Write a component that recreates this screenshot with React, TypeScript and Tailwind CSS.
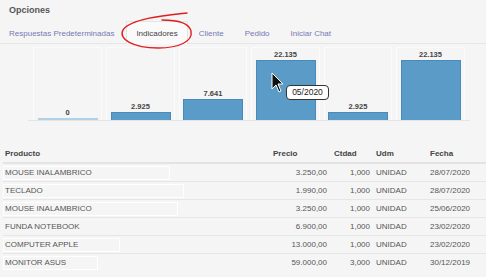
const tabs = ["Respuestas Predeterminadas", "Indicadores", "Cliente", "Pedido", "Iniciar Chat"]

const bars = [
  { label: "0", value: 0, w: 73 },
  { label: "2.925", value: 2925, w: 73 },
  { label: "7.641", value: 7641, w: 72 },
  { label: "22.135", value: 22135, w: 73 },
  { label: "2.925", value: 2925, w: 72 },
  { label: "22.135", value: 22135, w: 73 },
]

const rows = [
  { producto: "MOUSE INALAMBRICO", box: 167, precio: "3.250,00", ctdad: "1,000", udm: "UNIDAD", fecha: "28/07/2020" },
  { producto: "TECLADO", box: 181, precio: "1.990,00", ctdad: "1,000", udm: "UNIDAD", fecha: "28/07/2020" },
  { producto: "MOUSE INALAMBRICO", box: 175, precio: "3.250,00", ctdad: "1,000", udm: "UNIDAD", fecha: "25/06/2020" },
  { producto: "FUNDA NOTEBOOK", box: 0, precio: "6.900,00", ctdad: "1,000", udm: "UNIDAD", fecha: "23/02/2020" },
  { producto: "COMPUTER APPLE", box: 117, precio: "13.000,00", ctdad: "1,000", udm: "UNIDAD", fecha: "23/02/2020" },
  { producto: "MONITOR ASUS", box: 95, precio: "59.000,00", ctdad: "3,000", udm: "UNIDAD", fecha: "30/12/2019" },
]

const MAX = 22135

export default function App() {
  return (
    <div className="relative w-[486px] h-[277px] overflow-hidden bg-[#f5f5f5] font-['Liberation_Sans',Arial,sans-serif]">
      {/* Titulo */}
      <div className="h-[21px] flex items-center pl-[9px] text-[9px] font-bold text-[#555]">Opciones</div>

      {/* Tabs */}
      <div className="flex h-[23px] border-b border-[#e6e6e6]">
        {tabs.map((t, i) => {
          const active = t === "Indicadores"
          return (
            <div
              key={t}
              className={
                active
                  ? "flex items-center h-[23px] px-[9px] pt-[1px] text-[8px] text-[#444] bg-[#fafafa] border border-b-0 border-[#e4e4e4]"
                  : i === 0
                    ? "flex items-center h-[23px] pt-[2px] pl-[9px] pr-[12px] text-[8px] text-[#7579b4]"
                    : "flex items-center h-[23px] pt-[2px] pl-[11px] pr-[10px] text-[8px] text-[#7579b4]"
              }
            >
              {t}
            </div>
          )
        })}
      </div>

      {/* Grafico */}
      <div className="ml-[28px] w-[442px] mt-[3px] pl-[3px] flex border-b border-[#e4e4e4]">
        {bars.map((b, i) => {
          const h = b.value === 0 ? 2 : Math.round((b.value / MAX) * 60)
          return (
            <div key={i} className="h-[73px] px-[2px] flex" style={{ width: b.w }}>
              <div className="flex-1 flex flex-col items-center justify-end border border-b-0 border-[#fbfbfb]">
                <div className="text-[7.5px] leading-[9px] mb-[1px] font-bold text-[#444]">{b.label}</div>
                {b.value === 0 ? (
                  <div className="w-[60px] bg-[#b2d0e6]" style={{ height: h }} />
                ) : (
                  <div className="w-[60px] bg-[#5a9bc8] border border-b-0 border-[#4a8abb]" style={{ height: h }} />
                )}
              </div>
            </div>
          )
        })}
      </div>

      {/* Tabla */}
      <div className="ml-[3px] mt-[25px] text-[8px]">
        <div className="grid grid-cols-[265px_63px_43px_54px_1fr] h-[18px] items-center border-b-2 border-[#e3e3e3] font-bold text-[#444]">
          <div className="pl-[2px]">Producto</div>
          <div className="pl-[5px]">Precio</div>
          <div className="pl-[3px]">Ctdad</div>
          <div className="pl-[2px]">Udm</div>
          <div className="pl-[2px]">Fecha</div>
        </div>
        {rows.map((r, i) => (
          <div
            key={i}
            className={
              "grid grid-cols-[265px_63px_43px_54px_1fr] h-[18px] items-center text-[#555] " +
              (i < rows.length - 1 ? "border-b border-[#e6e6e6]" : "")
            }
          >
            <div className="flex">
              {r.box > 0 ? (
                <div className="h-[14px] flex items-center pl-[1px] border border-white" style={{ width: r.box }}>
                  {r.producto}
                </div>
              ) : (
                <div className="pl-[2px]">{r.producto}</div>
              )}
            </div>
            <div className="text-right pr-[4px]">{r.precio}</div>
            <div className="text-right pr-[4px]">{r.ctdad}</div>
            <div className="pl-[2px]">{r.udm}</div>
            <div className="pl-[2px]">{r.fecha}</div>
          </div>
        ))}
      </div>

      {/* Marca roja sobre la pestaña */}
      <svg className="absolute left-[117px] top-[11px]" width="84" height="42" viewBox="0 0 84 42" fill="none">
        <path
          d="M70 2 C52 4, 14 7, 6 19 C1 28, 16 37, 41 37 C63 37, 76 30, 74 20 C72 12, 60 9, 45 9"
          stroke="#e01e1e"
          strokeWidth="1.4"
          strokeLinecap="round"
        />
      </svg>

      {/* Cursor */}
      <svg className="absolute left-[271px] top-[72px]" width="13" height="21" viewBox="0 0 13 21">
        <path d="M1 1 L1 17 L5 13 L8 20 L10 19 L7 12 L12 12 Z" fill="#111" stroke="#fff" strokeWidth="1" strokeLinejoin="round" />
      </svg>

      {/* Tooltip */}
      <div className="absolute left-[286px] top-[85px] w-[43px] h-[15px] flex items-center justify-center bg-white border border-[#333] rounded-[4px] text-[8.5px] text-[#222]">
        05/2020
      </div>
    </div>
  )
}
